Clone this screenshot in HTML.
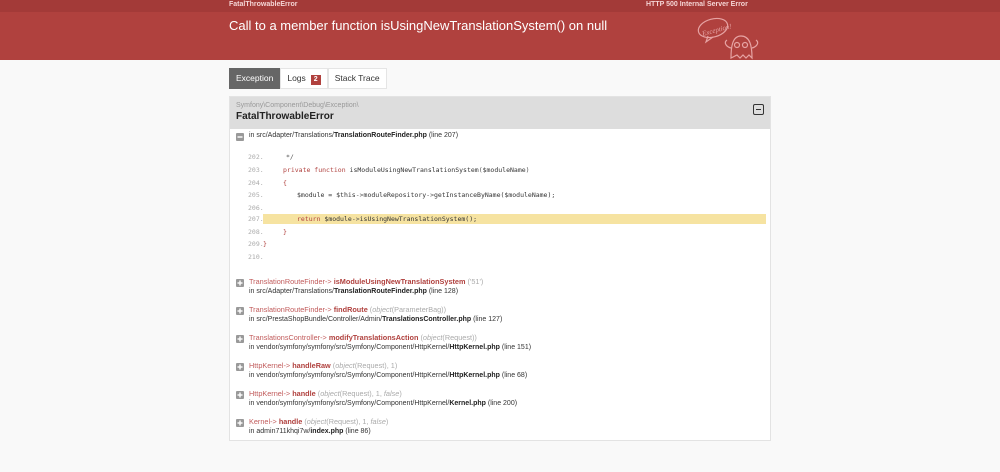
<!DOCTYPE html>
<html><head><style>
*{margin:0;padding:0;box-sizing:border-box}
body{width:1000px;height:472px;background:#f9f9f9;font-family:"Liberation Sans",sans-serif;overflow:hidden;position:relative;color:#222}
.top{position:absolute;left:0;top:0;width:1000px;height:12px;background:#a33a38;color:#f5d5d5;font-size:7px;font-weight:bold}
.top span{position:absolute;top:1px}
.hdr{position:absolute;left:0;top:12px;width:1000px;height:48px;background:#b0413e;color:#fff}
.hdr h1{position:absolute;left:229px;top:6px;font-size:13px;font-weight:normal}
.tabs{position:absolute;left:229px;top:68px;height:21px;display:flex;font-size:8.5px}
.tab{background:#fff;border:1px solid #e5e5e5;padding:0 6px;line-height:19px;color:#333}
.tab.a{background:#666;color:#fff;border-color:#666}
.badge{display:inline-block;background:#b0413e;color:#fff;font-size:7px;font-weight:bold;padding:0 3px;line-height:10px;margin-left:5px}
.card{position:absolute;left:229px;top:96px;width:542px;height:345px;background:#fff;border:1px solid #e3e3e3}
.ch{height:32px;background:#ddd;position:relative}
.ns{position:absolute;left:6px;top:5px;font-size:7px;color:#999}
.cls{position:absolute;left:6px;top:14px;font-size:10px;font-weight:bold;color:#222}
.tog{position:absolute;right:6px;top:7px;width:11px;height:11px;border:1.5px solid #333;border-radius:2px}
.tog:after{content:"";position:absolute;left:1.5px;top:3.5px;width:5px;height:1.5px;background:#333}
svg.pl{position:absolute;left:6px}
.ln{position:absolute;left:19px;font-size:7px;color:#333;white-space:nowrap}
.ln b{color:#222}
.code{position:absolute;left:0;font-family:"DejaVu Sans Mono",monospace;font-size:6.5px;white-space:pre;color:#555}
.code i{font-style:normal;color:#aaa;position:absolute;left:18px}
.code span.t{position:absolute}
.k{color:#b0413e}.v{color:#333}
.hl{position:absolute;left:33px;width:503px;height:10px;background:#f6e3a1}
.tr{position:absolute;left:19px;font-size:7.3px;color:#c15b5b;white-space:nowrap}
.tr .m{font-weight:bold;color:#b0413e}.tr .a{color:#aaa}
</style></head><body>
<div class="top"><span style="left:229px">FatalThrowableError</span><span style="left:646px">HTTP 500 Internal Server Error</span></div>
<div class="hdr"><h1>Call to a member function isUsingNewTranslationSystem() on null</h1>
<svg style="position:absolute;left:696px;top:2px" width="72" height="46" viewBox="0 0 72 46" fill="none" stroke="#e6a3a3" stroke-width="1.2"><ellipse cx="17" cy="14" rx="15" ry="9" transform="rotate(-15 17 14)"/><path d="M12 22l-2 6 7-5"/><text x="5" y="19" font-size="7" fill="#e6a3a3" stroke="none" font-family="Liberation Serif" font-style="italic" transform="rotate(-15 17 14)">Exception!</text><path d="M35 44c0-10 1-22 10-22s11 10 11 22l-3-3-3 3-3-3-3 3-3-3z"/><circle cx="41" cy="31" r="2.5"/><circle cx="49" cy="31" r="2.5"/><path d="M35 34c-4-1-8-5-4-8M56 34c4-1 8-5 4-8"/></svg></div>
<div class="tabs"><div class="tab a">Exception</div><div class="tab">Logs<span class="badge">2</span></div><div class="tab">Stack Trace</div></div>
<div class="card">
<div class="ch"><div class="ns">Symfony\Component\Debug\Exception\</div><div class="cls">FatalThrowableError</div><div class="tog"></div></div>
<svg class="pl" style="top:36px" width="8" height="8"><rect width="8" height="8" rx="1" fill="#999"/><rect x="1.5" y="3.3" width="5" height="1.4" fill="#fff"/></svg><div class="ln" style="top:35px">in src/Adapter/Translations/<b>TranslationRouteFinder.php</b> (line 207)</div>
<div class="hl" style="top:117px"></div>
<div class="code" style="top:56px"><i>202.</i><span class="t" style="left:56px">*/</span></div>
<div class="code" style="top:69px"><i>203.</i><span class="t" style="left:53px"><span class="k">private function</span> <span class="v">isModuleUsingNewTranslationSystem</span>(<span class="v">$moduleName</span>)</span></div>
<div class="code" style="top:82px"><i>204.</i><span class="t" style="left:53px"><span class="k">{</span></span></div>
<div class="code" style="top:94px"><i>205.</i><span class="t" style="left:67px"><span class="v">$module = $this</span>-&gt;<span class="v">moduleRepository</span>-&gt;<span class="v">getInstanceByName($moduleName);</span></span></div>
<div class="code" style="top:107px"><i>206.</i></div>
<div class="code" style="top:118px"><i>207.</i><span class="t" style="left:67px"><span class="k">return</span> <span class="v">$module</span>-&gt;<span class="v">isUsingNewTranslationSystem();</span></span></div>
<div class="code" style="top:131px"><i>208.</i><span class="t" style="left:53px"><span class="k">}</span></span></div>
<div class="code" style="top:143px"><i>209.</i><span class="t" style="left:33px"><span class="k">}</span></span></div>
<div class="code" style="top:156px"><i>210.</i></div>

<svg class="pl" style="top:182px" width="8" height="8"><rect width="8" height="8" rx="1" fill="#999"/><rect x="1.5" y="3.3" width="5" height="1.4" fill="#fff"/><rect x="3.3" y="1.5" width="1.4" height="5" fill="#fff"/></svg><div class="tr" style="top:180px">TranslationRouteFinder-&gt; <span class="m">isModuleUsingNewTranslationSystem</span> <span class="a">('51')</span></div>
<div class="ln" style="top:191px">in src/Adapter/Translations/<b>TranslationRouteFinder.php</b> (line 128)</div>
<svg class="pl" style="top:210px" width="8" height="8"><rect width="8" height="8" rx="1" fill="#999"/><rect x="1.5" y="3.3" width="5" height="1.4" fill="#fff"/><rect x="3.3" y="1.5" width="1.4" height="5" fill="#fff"/></svg><div class="tr" style="top:208px">TranslationRouteFinder-&gt; <span class="m">findRoute</span> <span class="a">(<i>object</i>(ParameterBag))</span></div>
<div class="ln" style="top:219px">in src/PrestaShopBundle/Controller/Admin/<b>TranslationsController.php</b> (line 127)</div>
<svg class="pl" style="top:238px" width="8" height="8"><rect width="8" height="8" rx="1" fill="#999"/><rect x="1.5" y="3.3" width="5" height="1.4" fill="#fff"/><rect x="3.3" y="1.5" width="1.4" height="5" fill="#fff"/></svg><div class="tr" style="top:236px">TranslationsController-&gt; <span class="m">modifyTranslationsAction</span> <span class="a">(<i>object</i>(Request))</span></div>
<div class="ln" style="top:247px">in vendor/symfony/symfony/src/Symfony/Component/HttpKernel/<b>HttpKernel.php</b> (line 151)</div>
<svg class="pl" style="top:266px" width="8" height="8"><rect width="8" height="8" rx="1" fill="#999"/><rect x="1.5" y="3.3" width="5" height="1.4" fill="#fff"/><rect x="3.3" y="1.5" width="1.4" height="5" fill="#fff"/></svg><div class="tr" style="top:264px">HttpKernel-&gt; <span class="m">handleRaw</span> <span class="a">(<i>object</i>(Request), 1)</span></div>
<div class="ln" style="top:275px">in vendor/symfony/symfony/src/Symfony/Component/HttpKernel/<b>HttpKernel.php</b> (line 68)</div>
<svg class="pl" style="top:294px" width="8" height="8"><rect width="8" height="8" rx="1" fill="#999"/><rect x="1.5" y="3.3" width="5" height="1.4" fill="#fff"/><rect x="3.3" y="1.5" width="1.4" height="5" fill="#fff"/></svg><div class="tr" style="top:292px">HttpKernel-&gt; <span class="m">handle</span> <span class="a">(<i>object</i>(Request), 1, <i>false</i>)</span></div>
<div class="ln" style="top:303px">in vendor/symfony/symfony/src/Symfony/Component/HttpKernel/<b>Kernel.php</b> (line 200)</div>
<svg class="pl" style="top:322px" width="8" height="8"><rect width="8" height="8" rx="1" fill="#999"/><rect x="1.5" y="3.3" width="5" height="1.4" fill="#fff"/><rect x="3.3" y="1.5" width="1.4" height="5" fill="#fff"/></svg><div class="tr" style="top:320px">Kernel-&gt; <span class="m">handle</span> <span class="a">(<i>object</i>(Request), 1, <i>false</i>)</span></div>
<div class="ln" style="top:331px">in admin711khqi7w/<b>index.php</b> (line 86)</div>
</div>
</body></html>
